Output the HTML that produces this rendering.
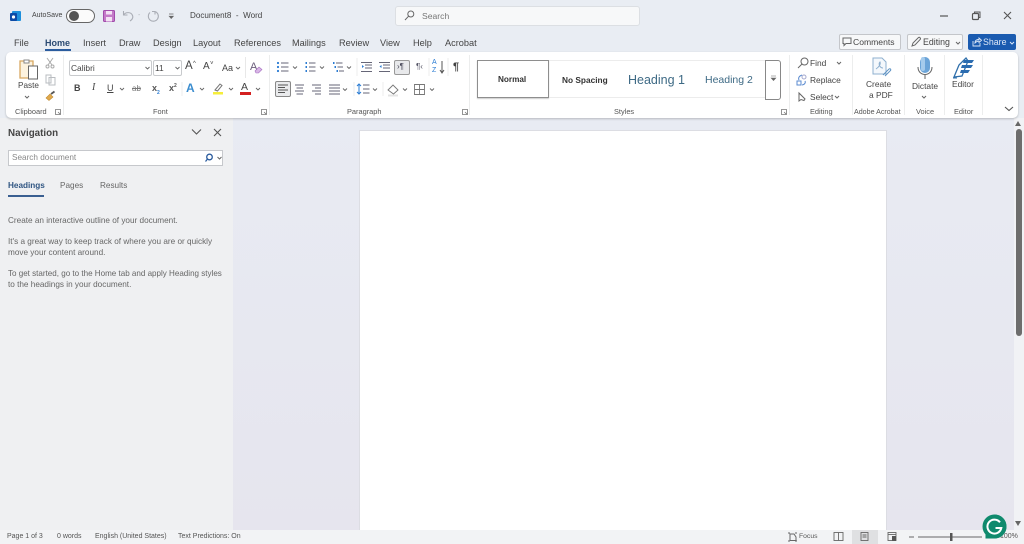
<!DOCTYPE html>
<html style="background:#e9edf3"><head><meta charset="utf-8"><style>
html,body{margin:0;padding:0;width:1024px;height:544px;overflow:hidden}
body{position:relative;background:#e9edf3;font-family:"Liberation Sans",sans-serif;color:#3c3c3c}
#w{position:absolute;left:0;top:0;width:1024px;height:544px;filter:blur(.35px)}
.t{position:absolute;white-space:nowrap;line-height:12px;font-size:8.6px;color:#444}
.b{position:absolute;box-sizing:border-box}
svg{position:absolute;overflow:visible}
.tab{font-size:9.2px;top:37px;color:#444}
.lab{font-size:7.4px;top:106px;color:#555}
.nav{font-size:8.2px;color:#666}
.st{font-size:7px;top:531px;color:#555}
.s{fill:none;stroke:#666;stroke-width:1}
</style></head><body><div id="w">
<!-- doc background -->
<div class="b" style="left:233px;top:118px;width:791px;height:412px;background:linear-gradient(180deg,#e8ebf3,#e6e5ee)"></div>
<div class="b" style="left:0;top:118px;width:233px;height:412px;background:#eff0f2"></div>
<div class="b" style="left:359px;top:130px;width:528px;height:400px;background:#fff;border:1px solid #dcdde3;border-bottom:0"></div>
<div class="b" style="left:1014px;top:118px;width:10px;height:412px;background:#f1f2f5"></div>
<div class="b" style="left:1015.500px;top:129px;width:6px;height:207px;background:#6d6d6d;border-radius:3px"></div>
<svg style="left:1015px;top:121px" width="8" height="6"><path d="M3 0L6 5H0Z" fill="#666"/></svg>
<svg style="left:1015px;top:521px" width="8" height="6"><path d="M0 0H6L3 5Z" fill="#666"/></svg>
<div class="b" style="left:0;top:530px;width:1024px;height:14px;background:#f2f3f5"></div>

<!-- title bar -->
<svg style="left:10px;top:11px" width="12" height="11"><rect x="2" y="0" width="9" height="10" rx="1" fill="#1d8fdc"/><rect x="0" y="2" width="7" height="8" rx="1" fill="#0c4aa6"/><circle cx="3.500" cy="6" r="1.600" fill="#fff"/></svg>
<span class="t" style="left:32px;top:10px;font-size:7px">AutoSave</span>
<div class="b" style="left:66px;top:9px;width:29px;height:14px;border:1px solid #666;border-radius:7px;background:#fbfbfb"></div>
<div class="b" style="left:69px;top:11px;width:10px;height:10px;border-radius:5px;background:#555"></div>
<svg style="left:103px;top:10px" width="13" height="13"><rect x=".5" y=".5" width="11" height="11" rx="1" fill="#c47ac8" stroke="#a14bab"/><rect x="3" y="1" width="6" height="3.500" fill="#f3e2f4"/><rect x="3" y="7" width="6" height="4.500" fill="#f3e2f4"/></svg>
<svg style="left:122px;top:10px" width="12" height="12"><path d="M1.500 1V5H5.500M1.500 5C3.500 2 9 1.500 10.500 5.500C11.500 8 9.500 10 8 11" fill="none" stroke="#a9adb5" stroke-width="1.100"/></svg>
<span class="t" style="left:138px;top:10px;color:#b0b4ba;font-size:7px">-</span>
<svg style="left:147px;top:10px" width="12" height="12"><path d="M8 1.500A5 5 0 1 1 3 2.500M8 1.500V4.500M8 1.500H5" fill="none" stroke="#a9adb5" stroke-width="1.100"/></svg>
<svg style="left:168px;top:13px" width="7" height="7"><path d="M1 1H5.500M1.200 3.200L3.200 5.500L5.300 3.200Z" fill="#666" stroke="#666" stroke-width=".7"/></svg>
<span class="t" style="left:190px;top:10px;font-size:8.100px;color:#444">Document8&nbsp; -&nbsp; Word</span>
<div class="b" style="left:395px;top:6px;width:245px;height:20px;background:#f7f8f9;border:1px solid #dcdfe3;border-radius:3px"></div>
<svg style="left:404px;top:10px" width="11" height="11"><circle cx="6.800" cy="4" r="3" class="s"/><path d="M4.600 6.200L1 10" class="s"/></svg>
<span class="t" style="left:422px;top:10px;font-size:8.600px;color:#777">Search</span>
<svg style="left:940px;top:11px" width="76" height="10"><path d="M0 5H8" stroke="#555" stroke-width="1.200"/><rect x="32.500" y="2.500" width="6" height="6" rx="1" fill="none" stroke="#555" stroke-width="1.200"/><path d="M34.500 2V1H40V6.500H39" fill="none" stroke="#555"/><path d="M64 1L71 8M71 1L64 8" stroke="#555" stroke-width="1.100"/></svg>

<!-- tabs -->
<span class="t tab" style="left:14px">File</span>
<span class="t tab" style="left:45px;font-weight:bold;color:#2b4a72;font-size:9px">Home</span>
<div class="b" style="left:45px;top:49px;width:26px;height:2px;background:#2b5c9e"></div>
<span class="t tab" style="left:83px">Insert</span>
<span class="t tab" style="left:119px">Draw</span>
<span class="t tab" style="left:153px">Design</span>
<span class="t tab" style="left:193px">Layout</span>
<span class="t tab" style="left:234px">References</span>
<span class="t tab" style="left:292px">Mailings</span>
<span class="t tab" style="left:339px">Review</span>
<span class="t tab" style="left:380px">View</span>
<span class="t tab" style="left:413px">Help</span>
<span class="t tab" style="left:445px">Acrobat</span>

<div class="b" style="left:839px;top:34px;width:62px;height:16px;background:#f7f8f9;border:1px solid #c4c6ca;border-radius:2px"></div>
<svg style="left:842px;top:37px" width="10" height="10"><path d="M1 1H9V6.500H4L2 8.500V6.500H1Z" class="s"/></svg>
<span class="t" style="left:853px;top:36px;font-size:8.600px">Comments</span>
<div class="b" style="left:907px;top:34px;width:56px;height:16px;background:#f7f8f9;border:1px solid #c4c6ca;border-radius:2px"></div>
<svg style="left:910px;top:36px" width="12" height="12"><path d="M2 10L3 7L8.500 1.500C9.500 .8 11 2.200 10.300 3.300L5 9Z" class="s"/></svg>
<span class="t" style="left:923px;top:36px;font-size:8.800px">Editing</span>
<svg style="left:955px;top:41px" width="6" height="4"><path d="M1 1L3 3L5 1" class="s"/></svg>
<div class="b" style="left:968px;top:34px;width:48px;height:16px;background:#1a5bb0;border-radius:2px"></div>
<svg style="left:972px;top:37px" width="10" height="10"><path d="M1 4V9H8V6M3 6C3 3 5 2.500 7 2.500V1L9.500 3.300L7 5.500V4C5 4 4 5 3 6Z" fill="none" stroke="#dce8f8" stroke-width=".9"/></svg>
<span class="t" style="left:983px;top:36px;font-size:8.800px;color:#dce8f8">Share</span>
<svg style="left:1009px;top:41px" width="6" height="4"><path d="M1 1L3 3L5 1" fill="none" stroke="#dce8f8"/></svg>

<!-- ribbon -->
<div class="b" style="left:6px;top:52px;width:1012px;height:66px;background:#fff;border-radius:5px;box-shadow:0 1px 2px rgba(0,0,0,.22)"></div>
<div class="b" style="left:63px;top:55px;width:1px;height:60px;background:#eceded"></div>
<div class="b" style="left:269px;top:55px;width:1px;height:60px;background:#eceded"></div>
<div class="b" style="left:469px;top:55px;width:1px;height:60px;background:#eceded"></div>
<div class="b" style="left:789px;top:55px;width:1px;height:60px;background:#eceded"></div>
<div class="b" style="left:852px;top:55px;width:1px;height:60px;background:#eceded"></div>
<div class="b" style="left:904px;top:55px;width:1px;height:60px;background:#eceded"></div>
<div class="b" style="left:944px;top:55px;width:1px;height:60px;background:#eceded"></div>
<div class="b" style="left:982px;top:55px;width:1px;height:60px;background:#eceded"></div>

<span class="t lab" style="left:15px">Clipboard</span>
<span class="t lab" style="left:153px">Font</span>
<span class="t lab" style="left:347px">Paragraph</span>
<span class="t lab" style="left:614px">Styles</span>
<span class="t lab" style="left:810px">Editing</span>
<span class="t lab" style="left:854px;font-size:7.100px">Adobe Acrobat</span>
<span class="t lab" style="left:916px">Voice</span>
<span class="t lab" style="left:954px">Editor</span>
<svg style="left:0;top:0" width="1024" height="130">
 <g fill="none" stroke="#777" stroke-width=".8">
  <path d="M55.500 109.500H60.500V114.500H55.500ZM58 112L60.500 114.500"/>
  <path d="M261.500 109.500H266.500V114.500H261.500ZM264 112L266.500 114.500"/>
  <path d="M462.500 109.500H467.500V114.500H462.500ZM465 112L467.500 114.500"/>
  <path d="M781.500 109.500H786.500V114.500H781.500ZM784 112L786.500 114.500"/>
  <path d="M1005 107L1009 110.500L1013 107" stroke="#555" stroke-width="1.100"/>
 </g>
</svg>

<!-- clipboard -->
<svg style="left:18px;top:57px" width="22" height="24"><path d="M2 4H15V21H2Z" fill="#fdf3df" stroke="#d8a860" stroke-width="1.300"/><path d="M6 3H11V6H6Z" fill="#fff" stroke="#888"/><rect x="10.500" y="9" width="9" height="13" fill="#fff" stroke="#666"/></svg>
<span class="t" style="left:18px;top:80px;font-size:8.200px">Paste</span>
<svg style="left:24px;top:95px" width="6" height="4"><path d="M1 1L3 3L5 1" class="s"/></svg>
<svg style="left:45px;top:57px" width="10" height="12"><path d="M2 1L7 8M8 1L3 8" stroke="#aaa" fill="none"/><circle cx="2.500" cy="9.500" r="1.500" fill="none" stroke="#aaa"/><circle cx="7.500" cy="9.500" r="1.500" fill="none" stroke="#aaa"/></svg>
<svg style="left:45px;top:74px" width="11" height="12"><path d="M1 1H6V9H1ZM4 3.500H10V11H4Z" fill="#fff" stroke="#b9bcc0"/></svg>
<svg style="left:45px;top:90px" width="11" height="12"><path d="M1 8L5 4L8 7L4 10.500Z" fill="#e0a94d" stroke="#c08a30" stroke-width=".6"/><path d="M6 4L9.500 1.500" stroke="#555" stroke-width="1.800"/></svg>

<!-- font -->
<div class="b" style="left:69px;top:60px;width:83px;height:16px;border:1px solid #c8cacd;border-radius:2px"></div>
<span class="t" style="left:71px;top:62px;font-size:8.400px">Calibri</span>
<div class="b" style="left:153px;top:60px;width:29px;height:16px;border:1px solid #c8cacd;border-radius:2px"></div>
<span class="t" style="left:155px;top:62px;font-size:8.400px">11</span>
<svg style="left:0;top:0" width="1024" height="130">
 <g fill="none" stroke="#666" stroke-width=".9">
  <path d="M145.500 67L147.500 69L149.500 67M175.500 67L177.500 69L179.500 67M236 67L238 69L240 67"/>
  <path d="M120 88L122 90L124 88M200 88L202 90L204 88M229 88L231 90L233 88M256 88L258 90L260 88"/>
  <path d="M293 66.500L295 68.500L297 66.500M320 66.500L322 68.500L324 66.500M347 66.500L349 68.500L351 66.500"/>
  <path d="M343 88.500L345 90.500L347 88.500M373 88.500L375 90.500L377 88.500M403 88.500L405 90.500L407 88.500M430 88.500L432 90.500L434 88.500"/>
 </g>
 <path d="M245.500 57V78" stroke="#e8e8e8" fill="none"/>
 <path d="M182 82V96M354 82V96M383 82V96M300 57V57M357 58V76M429 58V76M448 58V76" stroke="#ececec" fill="none"/>
</svg>
<span class="t" style="left:185px;top:60px;font-size:11.500px">A</span>
<span class="t" style="left:193px;top:58px;font-size:6px">^</span>
<span class="t" style="left:203px;top:61px;font-size:10px">A</span>
<span class="t" style="left:210px;top:58px;font-size:6px">˅</span>
<span class="t" style="left:222px;top:62px;font-size:9px">Aa</span>
<span class="t" style="left:250px;top:61px;font-size:11px;color:#6a5d7a">A</span>
<svg style="left:254px;top:66px" width="9" height="8"><path d="M1 5L5 1L8 3.500L4.500 7H2Z" fill="#d8b6e6" stroke="#a56dc0" stroke-width=".6"/></svg>
<span class="t" style="left:74px;top:82px;font-weight:bold;font-size:9px">B</span>
<span class="t" style="left:92px;top:82px;font-style:italic;font-family:'Liberation Serif',serif;font-size:10px">I</span>
<span class="t" style="left:107px;top:82px;font-size:9px;text-decoration:underline">U</span>
<span class="t" style="left:132px;top:83px;font-size:8px;text-decoration:line-through;color:#777">ab</span>
<span class="t" style="left:152px;top:82px;font-size:9px;font-weight:bold;color:#555">x<sub style="font-size:5px;color:#2b7cd3">2</sub></span>
<span class="t" style="left:169px;top:82px;font-size:9px;font-weight:bold;color:#555">x<sup style="font-size:5px;line-height:0">2</sup></span>
<span class="t" style="left:186px;top:82px;font-size:12px;font-weight:bold;color:#3b8dcf">A</span>
<svg style="left:212px;top:82px" width="12" height="13"><path d="M3 8L8 2L10 3.500L5.500 9Z" fill="#fff" stroke="#777"/><rect x="1" y="10" width="10" height="2.500" fill="#f6ee3a"/></svg>
<span class="t" style="left:241px;top:81px;font-size:10.500px">A</span>
<div class="b" style="left:240px;top:92px;width:11px;height:2.500px;background:#d42020"></div>

<!-- paragraph icons -->
<svg style="left:0;top:0" width="1024" height="130">
 <g fill="none" stroke="#667" stroke-width=".9">
  <path d="M281 63H288.500M281 67H288.500M281 71H288.500M309 63H315.500M309 67H315.500M309 71H315.500M336 63H342.500M337.500 67H343M339 71H344"/>
  <path d="M361 62.500H372M365 65H372M365 68H372M361 71.500H372M379 62.500H390M383 65H390M383 68H390M379 71.500H390"/>
  <path d="M295 85H304M296.500 88H303M295 91H304M296.500 94H303M312 85H321M315 88H321M312 91H321M315 94H321M329 85H340M329 88H340M329 91H340M329 94H340"/>
  <path d="M363 85H369.500M363 89H369.500M363 93H369.500"/>
  <path d="M414.500 84.500H424.500V94.500H414.500ZM419.500 84.500V94.500M414.500 89.500H424.500" stroke="#777"/>
  <path d="M388 90L393 85L398 90L393.500 94Z" stroke="#777"/>
 </g>
 <g fill="#2b7cd3">
  <circle cx="278" cy="63" r="1.100"/><circle cx="278" cy="67" r="1.100"/><circle cx="278" cy="71" r="1.100"/>
  <rect x="305.500" y="62" width="1.500" height="2"/><rect x="305.500" y="66" width="1.500" height="2"/><rect x="305.500" y="70" width="1.500" height="2"/>
  <rect x="333" y="62" width="1.500" height="2"/><rect x="334.500" y="66" width="1.500" height="2"/><rect x="336.500" y="70" width="1.500" height="2"/>
  <path d="M362 65L364 66.500L362 68ZM381.500 65L379.500 66.500L381.500 68Z"/>
 </g>
 <path d="M361 86L359 84L357 86M359 84V94M357 92L359 94L361 92" fill="none" stroke="#2b7cd3"/>
 <rect x="388" y="94.500" width="10" height="2" fill="#e4e4e4"/>
</svg>
<div class="b" style="left:394px;top:60px;width:16px;height:15px;background:#e8e9eb;border:1px solid #999;border-radius:2px"></div>
<span class="t" style="left:397px;top:61px;font-size:8px;color:#445">›¶</span>
<span class="t" style="left:416px;top:61px;font-size:8px;color:#556">¶‹</span>
<span class="t" style="left:432px;top:59px;font-size:7px;color:#2b7cd3;line-height:8px">A<br>Z</span>
<svg style="left:439px;top:60px" width="6" height="14"><path d="M3 1V12M1 10L3 13L5 10" fill="none" stroke="#555"/></svg>
<span class="t" style="left:453px;top:61px;font-size:11px;font-weight:bold;color:#444">¶</span>
<div class="b" style="left:275px;top:81px;width:16px;height:16px;background:#eaebed;border:1px solid #888;border-radius:2px"></div>
<svg style="left:275px;top:81px" width="16" height="16"><path d="M3 4H13M3 6.500H10M3 9H13M3 11.500H10" stroke="#555" fill="none"/></svg>

<!-- styles -->
<div class="b" style="left:477px;top:60px;width:72px;height:38px;border:1px solid #8e8e8e;box-shadow:0 1px 1px #ccc"></div>
<div class="b" style="left:549px;top:60px;width:216px;height:38px;border-top:1px solid #ececec;border-bottom:1px solid #ececec"></div>
<span class="t" style="left:498px;top:74px;font-size:8.200px;font-weight:bold;color:#333">Normal</span>
<span class="t" style="left:562px;top:74px;font-size:8.300px;font-weight:bold;color:#333">No Spacing</span>
<span class="t" style="left:628px;top:74px;font-size:12.500px;color:#3e6a85">Heading 1</span>
<span class="t" style="left:705px;top:74px;font-size:10.500px;color:#3e6a85">Heading 2</span>
<div class="b" style="left:765px;top:60px;width:16px;height:40px;border:1px solid #888;border-radius:0 3px 3px 0"></div>
<svg style="left:770px;top:75px" width="7" height="7"><path d="M1 1H6M1.200 3L3.500 5.500L5.800 3Z" fill="#666" stroke="#666" stroke-width=".6"/></svg>

<!-- editing -->
<svg style="left:797px;top:57px" width="12" height="12"><circle cx="7.500" cy="4.500" r="3.500" class="s"/><path d="M5 7L1 11" class="s"/></svg>
<span class="t" style="left:810px;top:57px;font-size:8.400px">Find</span>
<svg style="left:836px;top:61px" width="6" height="4"><path d="M1 1L3 3L5 1" class="s"/></svg>
<svg style="left:796px;top:74px" width="12" height="13"><path d="M6 1C3 2 2 4 3 6M9 7C10 9 8 11 6 11" fill="none" stroke="#5b8bd0"/><circle cx="8" cy="3" r="2" fill="none" stroke="#a5a9ce"/><rect x="1" y="7" width="4" height="4" fill="none" stroke="#5b8bd0"/></svg>
<span class="t" style="left:810px;top:74px;font-size:8.400px">Replace</span>
<svg style="left:797px;top:92px" width="10" height="11"><path d="M2 1V9L4 7.500L7 8.500L8 7L2 1Z" class="s"/></svg>
<span class="t" style="left:810px;top:91px;font-size:8.400px">Select</span>
<svg style="left:834px;top:95px" width="6" height="4"><path d="M1 1L3 3L5 1" class="s"/></svg>

<!-- acrobat -->
<svg style="left:872px;top:57px" width="20" height="21"><path d="M1 1H10L14 5V17H1Z" fill="#f4f8fc" stroke="#8fb0cf"/><path d="M4 12C7 10 9 7 8 5C6 7 8 11 11 11" fill="none" stroke="#8fb0cf"/><path d="M11 18L17 12C18.500 11 19.500 13 18 14L13 19" fill="none" stroke="#5e93c4"/></svg>
<span class="t" style="left:866px;top:78px;font-size:8.400px">Create</span>
<span class="t" style="left:869px;top:89px;font-size:8.400px">a PDF</span>

<!-- dictate -->
<svg style="left:916px;top:56px" width="18" height="24"><rect x="4" y="1" width="10" height="16" rx="5" fill="#6ba4d8"/><rect x="5" y="1" width="4" height="14" rx="2" fill="#a5cbec"/><path d="M2 11C2 21 16 21 16 11M9 18V23" fill="none" stroke="#666"/></svg>
<span class="t" style="left:912px;top:80px;font-size:8.400px">Dictate</span>
<svg style="left:921px;top:95px" width="6" height="4"><path d="M1 1L3 3L5 1" class="s"/></svg>

<!-- editor -->
<svg style="left:952px;top:56px" width="24" height="23"><path d="M2 21L7 9L14 2L16 5L10 20Z" fill="none" stroke="#2f6fab" stroke-width="1.300"/><path d="M12 4H22L20 7H11ZM10 9H21L19 12H9ZM9 14H18L16 17H8Z" fill="#2b6cb0"/><path d="M1 22H5" stroke="#2f6fab"/></svg>
<span class="t" style="left:952px;top:78px;font-size:8.400px">Editor</span>

<!-- nav pane -->
<span class="t" style="left:8px;top:128px;font-size:9.800px;font-weight:bold;color:#444">Navigation</span>
<svg style="left:192px;top:128px" width="34" height="9"><path d="M0 1.500L4.500 6L9 1.500M22 1L29 8M29 1L22 8" fill="none" stroke="#555" stroke-width="1.100"/></svg>
<div class="b" style="left:8px;top:150px;width:215px;height:16px;background:#fff;border:1px solid #c6c8cc"></div>
<span class="t nav" style="left:12px;top:152px;color:#888">Search document</span>
<svg style="left:204px;top:153px" width="18" height="10"><circle cx="5.500" cy="4" r="2.800" fill="none" stroke="#2b5c9e" stroke-width="1.300"/><path d="M3.500 6L1.500 8.500" stroke="#2b5c9e" stroke-width="1.300"/><path d="M13.500 4L15.500 6L17.500 4" class="s"/></svg>
<span class="t nav" style="left:8px;top:180px;font-weight:bold;color:#2f5582;font-size:8.200px">Headings</span>
<div class="b" style="left:8px;top:195px;width:36px;height:2px;background:#3a5f91"></div>
<span class="t nav" style="left:60px;top:180px">Pages</span>
<span class="t nav" style="left:100px;top:180px">Results</span>
<span class="t nav" style="left:8px;top:215px">Create an interactive outline of your document.</span>
<span class="t nav" style="left:8px;top:236px">It's a great way to keep track of where you are or quickly</span>
<span class="t nav" style="left:8px;top:247px">move your content around.</span>
<span class="t nav" style="left:8px;top:268px;font-size:8.050px">To get started, go to the Home tab and apply Heading styles</span>
<span class="t nav" style="left:8px;top:279px">to the headings in your document.</span>

<!-- status -->
<span class="t st" style="left:7px">Page 1 of 3</span>
<span class="t st" style="left:57px">0 words</span>
<span class="t st" style="left:95px">English (United States)</span>
<span class="t st" style="left:178px">Text Predictions: On</span>
<svg style="left:787px;top:532px" width="11" height="10"><path d="M1 1H3M8 1H10M1 9H3M8 9H10M3 2H7L9 5V8.500H3Z" class="s"/></svg>
<span class="t st" style="left:799px;font-size:6.800px">Focus</span>
<div class="b" style="left:852px;top:530px;width:26px;height:14px;background:#dfe0e2"></div>
<svg style="left:0;top:528px" width="1024" height="16"><g fill="none" stroke="#666" stroke-width=".9"><rect x="834" y="4.500" width="9" height="8"/><path d="M838.500 4.500V12.500"/><rect x="861" y="4.500" width="7" height="8"/><path d="M862.500 7H866.500M862.500 9H866.500"/><rect x="888" y="4.500" width="8" height="8"/><path d="M888 6.500H896"/></g><rect x="892" y="8" width="4" height="5" fill="#555"/><path d="M909 9H914M918 9H982" stroke="#666"/><rect x="950" y="5" width="2.500" height="8" fill="#555"/></svg>
<span class="t st" style="left:1000px">100%</span>

<!-- grammarly -->
<svg style="left:982px;top:514px" width="26" height="26"><path d="M12.500 .5A12 12 0 1 1 12.500 24.500H3.500V15A12 12 0 0 1 12.500 .5Z" fill="#0f8a6d"/><circle cx="12.500" cy="12.500" r="12" fill="#0f8a6d"/><path d="M18 8.300A7 7 0 1 0 19.300 14H13.500" fill="none" stroke="#fff" stroke-width="2"/></svg>
</div></body></html>
